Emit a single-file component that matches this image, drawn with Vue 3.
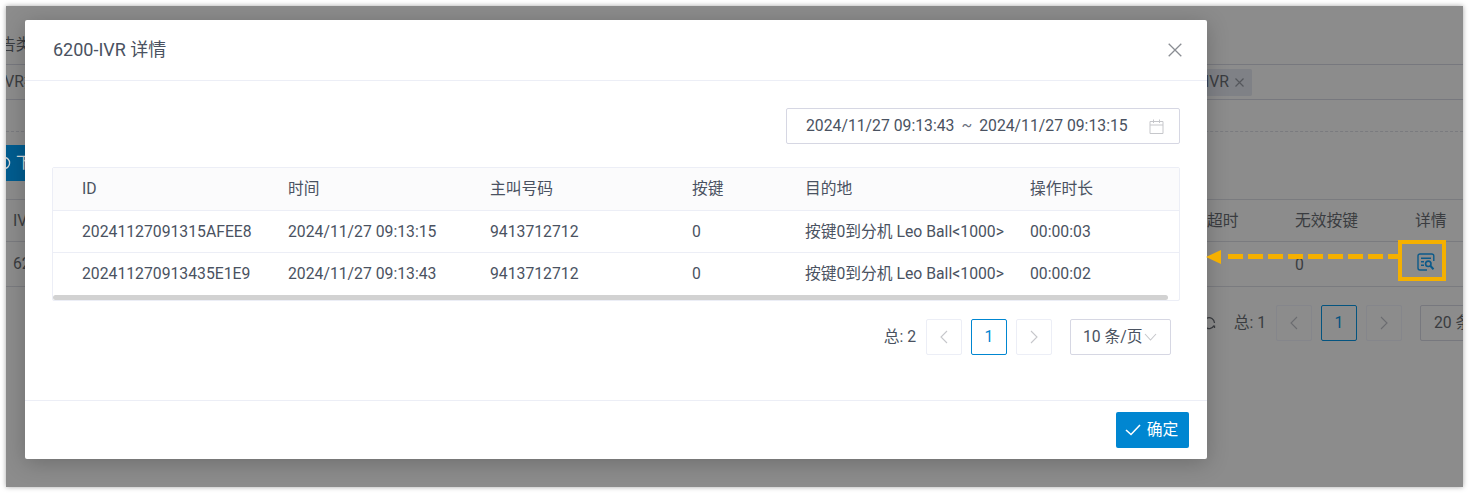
<template>
  <div class="shot">
    <div class="page">
      <div class="filter-row"><span class="cut">告类</span></div>
      <div class="tag-row">
        <span class="cut">IVR按</span>
        <span class="tag">6200-IVR
          <svg class="tag-x" width="9" height="9" viewBox="0 0 9 9" fill="none" stroke="#55575c" stroke-width="1.2"><path d="M.5.5l8 8M8.5.5l-8 8" /></svg>
        </span>
      </div>
      <div class="dash-row"></div>
      <div class="tool-row">
        <button class="download">
          <svg width="14" height="14" viewBox="0 0 14 14" fill="none" stroke="#d8d8d8" stroke-width="1.3"><circle cx="7" cy="7" r="5.6" /></svg>
          下载
        </button>
      </div>
      <div class="bg-table">
        <div class="bg-row head">
          <span class="cut-cell">IVR</span>
          <span class="c-timeout">超时</span>
          <span class="c-invalid">无效按键</span>
          <span class="c-detail">详情</span>
        </div>
        <div class="bg-row body">
          <span class="cut-cell">6200</span>
          <span class="c-timeout"></span>
          <span class="c-invalid">0</span>
          <span class="c-detail">
            <svg class="detail-icon" width="18" height="18" viewBox="0 0 18 18" fill="none" stroke="#0b5a8a" stroke-width="1.4">
              <path d="M16.8 8V3a2 2 0 0 0-2-2H3a2 2 0 0 0-2 2v12a2 2 0 0 0 2 2h7" />
              <path d="M4 5.2h10M4 8.7h3M4 12.2h3" />
              <circle cx="11.3" cy="10.8" r="2.7" stroke-width="1.6" />
              <path d="M13.3 12.8l3.2 3.4" stroke-width="2" />
            </svg>
          </span>
        </div>
      </div>
      <div class="bg-pager">
        <svg class="refresh" width="14" height="14" viewBox="0 0 14 14" fill="none" stroke="#3a3c40" stroke-width="1.3">
          <path d="M12 9.5A5.5 5.5 0 1 1 12.5 7M12.5 9.5v2.5" />
        </svg>
        <span class="bg-total">总: 1</span>
        <span class="bg-btn"><svg width="10" height="14" viewBox="0 0 10 14" fill="none" stroke="#6b6c70" stroke-width="1.1"><path d="M8 1L2 7l6 6" /></svg></span>
        <span class="bg-btn current">1</span>
        <span class="bg-btn"><svg width="10" height="14" viewBox="0 0 10 14" fill="none" stroke="#6b6c70" stroke-width="1.1"><path d="M2 1l6 6-6 6" /></svg></span>
        <span class="bg-size">20 条/页</span>
      </div>
    </div>

    <div class="dialog">
      <header class="dialog-head">
        <h2 class="dialog-title">6200-IVR 详情</h2>
        <svg class="close" width="14" height="14" viewBox="0 0 14 14" fill="none" stroke="#8a8d93" stroke-width="1.3">
          <path d="M.7.7l12.6 12.6M13.3.7L.7 13.3" />
        </svg>
      </header>

      <div class="dialog-body">
        <div class="picker-row">
          <div class="picker">
            <span>2024/11/27 09:13:43</span>
            <span class="tilde">~</span>
            <span>2024/11/27 09:13:15</span>
            <svg class="calendar" width="15" height="15" viewBox="0 0 15 15" fill="none" stroke="#c6c7cb" stroke-width="1">
              <path d="M1 2.5h13v12H1zM1 6h13M4.5.5v3.5M10.5.5v3.5" />
            </svg>
          </div>
        </div>

        <div class="table">
          <div class="row header">
            <div v-for="col in columns" :key="col" class="cell">{{ col }}</div>
          </div>
          <div v-for="row in rows" :key="row[0]" class="row">
            <div v-for="(val, i) in row" :key="i" class="cell">{{ val }}</div>
          </div>
          <div class="scrollbar"><div class="thumb"></div></div>
        </div>

        <div class="pager">
          <span class="total">总: 2</span>
          <span class="page-btn"><svg width="10" height="14" viewBox="0 0 10 14" fill="none" stroke="#c6c7cb" stroke-width="1.1"><path d="M8 1L2 7l6 6" /></svg></span>
          <span class="page-btn current">1</span>
          <span class="page-btn"><svg width="10" height="14" viewBox="0 0 10 14" fill="none" stroke="#c6c7cb" stroke-width="1.1"><path d="M2 1l6 6-6 6" /></svg></span>
          <span class="size">10 条/页<svg width="13" height="8" viewBox="0 0 13 8" fill="none" stroke="#c6c7cb" stroke-width="1.1"><path d="M1 1l5.5 6L12 1" /></svg></span>
        </div>
      </div>

      <footer class="dialog-foot">
        <button class="ok">
          <svg width="16" height="12" viewBox="0 0 16 12" fill="none" stroke="#fff" stroke-width="1.6"><path d="M1 6l5 4.5L15 1" /></svg>
          确定
        </button>
      </footer>
    </div>

    <div class="mark"></div>
    <div class="arrow-line"></div>
    <div class="arrow-head"></div>
  </div>
</template>

<script setup>
const columns = ['ID', '时间', '主叫号码', '按键', '目的地', '操作时长']

const rows = [
  ['20241127091315AFEE8', '2024/11/27 09:13:15', '9413712712', '0', '按键0到分机 Leo Ball<1000>', '00:00:03'],
  ['202411270913435E1E9', '2024/11/27 09:13:43', '9413712712', '0', '按键0到分机 Leo Ball<1000>', '00:00:02']
]
</script>

<style>
html, body {
  background: #fff;
  overflow: hidden;
}
</style>

<style scoped>
.shot {
  position: relative;
  width: 1457px;
  height: 481px;
  margin: 6px;
  background: #8c8c8c;
  box-shadow: 0 0 5px rgba(0, 0, 0, 0.35);
  overflow: hidden;
  font-family: Roboto, "Noto Sans CJK SC", sans-serif;
  font-size: 15.75px;
  line-height: 22px;
  color: #4a5261;
}

.page {
  color: #3a3c40;
}

.filter-row {
  height: 59px;
  padding-top: 28px;
  box-sizing: border-box;
  border-bottom: 1px solid #77787e;
}

.cut {
  display: block;
  margin-left: -6px;
  white-space: nowrap;
}

.tag-row {
  display: flex;
  justify-content: space-between;
  align-items: center;
  height: 35px;
  box-sizing: border-box;
  border-bottom: 1px solid #77787e;
}

.tag {
  display: flex;
  align-items: center;
  justify-content: flex-end;
  width: 90px;
  height: 27px;
  margin-right: 211px;
  padding-right: 8px;
  box-sizing: border-box;
  background: #7f8186;
  border-radius: 2px;
  white-space: nowrap;
}

.tag-x {
  margin-left: 6px;
}

.dash-row {
  height: 32px;
  box-sizing: border-box;
  border-bottom: 1px dashed #7a7b7f;
}

.tool-row {
  height: 67px;
  padding-top: 13px;
  box-sizing: border-box;
}

.download {
  display: flex;
  align-items: center;
  gap: 5px;
  width: 60px;
  height: 36px;
  margin-left: -9px;
  padding: 0;
  border: none;
  background: #005c8f;
  color: #d8d8d8;
  font: inherit;
  white-space: nowrap;
  overflow: hidden;
}

.bg-table {
  border-top: 1px solid #7a7b7f;
}

.bg-row {
  display: flex;
  align-items: center;
  box-sizing: border-box;
  border-bottom: 1px solid #7a7b7f;
}

.bg-row.head {
  height: 42px;
}

.bg-row.body {
  height: 45px;
}

.bg-row.body .c-invalid {
  padding-top: 2px;
  box-sizing: border-box;
}

.cut-cell {
  margin-left: 7px;
  flex: 1;
}

.c-timeout {
  width: 88px;
}

.c-invalid {
  width: 120px;
}

.c-detail {
  width: 48px;
}

.detail-icon {
  display: block;
  margin: -4px 0 0 2px;
}

.bg-pager {
  display: flex;
  justify-content: flex-end;
  align-items: center;
  gap: 9px;
  height: 36px;
  margin-top: 18px;
  margin-right: -77px;
}

.refresh {
  margin-right: 9px;
}

.bg-total {
  margin-right: 1px;
  white-space: nowrap;
}

.bg-btn {
  display: flex;
  align-items: center;
  justify-content: center;
  width: 36px;
  height: 36px;
  box-sizing: border-box;
  border: 1px solid #85868b;
  border-radius: 2px;
}

.bg-btn.current {
  border-color: #045480;
  color: #045480;
}

.bg-size {
  display: flex;
  align-items: center;
  width: 120px;
  height: 36px;
  margin-left: 9px;
  padding-left: 13px;
  box-sizing: border-box;
  border: 1px solid #77787e;
  border-radius: 2px;
  white-space: nowrap;
}

.dialog {
  position: absolute;
  left: 19px;
  top: 14px;
  width: 1182px;
  height: 439px;
  display: flex;
  flex-direction: column;
  background: #fff;
  border-radius: 2px;
  box-shadow: 0 4px 22px rgba(0, 0, 0, 0.22);
}

.dialog-head {
  display: flex;
  align-items: center;
  justify-content: space-between;
  height: 61px;
  padding: 0 25px 0 28px;
  box-sizing: border-box;
  border-bottom: 1px solid #eceef6;
  flex-shrink: 0;
}

.dialog-title {
  margin: 0;
  font-size: 18px;
  font-weight: 400;
  color: #4a5261;
}

.dialog-body {
  flex: 1;
  padding: 27px 27px 0;
}

.picker-row {
  display: flex;
  justify-content: flex-end;
}

.picker {
  display: flex;
  align-items: center;
  width: 394px;
  height: 36px;
  padding: 0 15px 0 19px;
  box-sizing: border-box;
  border: 1px solid #d6d7e3;
  border-radius: 2px;
}

.tilde {
  margin: 0 7px;
  color: #6b7280;
}

.calendar {
  margin-left: auto;
}

.table {
  margin-top: 23px;
  border: 1px solid #eceef6;
  border-radius: 2px;
}

.row {
  display: grid;
  grid-template-columns: 206px 202px 202px 113px 225px 1fr;
  height: 42px;
  box-sizing: border-box;
  align-items: center;
  border-bottom: 1px solid #eceef6;
}

.row.header {
  height: 43px;
  background: #fbfbfc;
}

.row:nth-last-child(2) {
  border-bottom: none;
}

.cell {
  padding-left: 29px;
  white-space: nowrap;
}

.scrollbar {
  height: 5px;
  padding-right: 11px;
}

.thumb {
  height: 5px;
  background: #d2d2d2;
  border-radius: 3px;
}

.pager {
  display: flex;
  justify-content: flex-end;
  align-items: center;
  gap: 9px;
  height: 36px;
  margin-top: 18px;
  padding-right: 9px;
}

.total {
  margin-right: 1px;
}

.page-btn {
  display: flex;
  align-items: center;
  justify-content: center;
  width: 36px;
  height: 36px;
  box-sizing: border-box;
  border: 1px solid #eceef6;
  border-radius: 2px;
}

.page-btn.current {
  border-color: #0086d1;
  color: #0086d1;
}

.size {
  display: flex;
  align-items: center;
  justify-content: space-between;
  width: 101px;
  height: 36px;
  margin-left: 9px;
  padding: 0 13px 0 12px;
  box-sizing: border-box;
  border: 1px solid #d6d7e3;
  border-radius: 2px;
  white-space: nowrap;
}

.dialog-foot {
  display: flex;
  justify-content: flex-end;
  align-items: center;
  height: 59px;
  padding-right: 18px;
  box-sizing: border-box;
  border-top: 1px solid #eceef6;
}

.ok {
  display: flex;
  align-items: center;
  justify-content: center;
  gap: 6px;
  width: 73px;
  height: 36px;
  padding: 0 2px 1px 0;
  border: none;
  border-radius: 2px;
  background: #0086d1;
  color: #fff;
  font: inherit;
}

/* annotation on top of the screenshot */
.mark {
  position: absolute;
  left: 1392px;
  top: 234px;
  width: 48px;
  height: 41px;
  box-sizing: border-box;
  border: 4px solid #f5b000;
}

.arrow-line {
  position: absolute;
  left: 1222px;
  top: 248px;
  width: 174px;
  height: 5px;
  background: repeating-linear-gradient(to right, #f5b000 0 15px, transparent 15px 20px);
}

.arrow-head {
  position: absolute;
  left: 1200px;
  top: 244px;
  width: 0;
  height: 0;
  border-top: 7px solid transparent;
  border-bottom: 7px solid transparent;
  border-right: 15px solid #f5b000;
}
</style>
